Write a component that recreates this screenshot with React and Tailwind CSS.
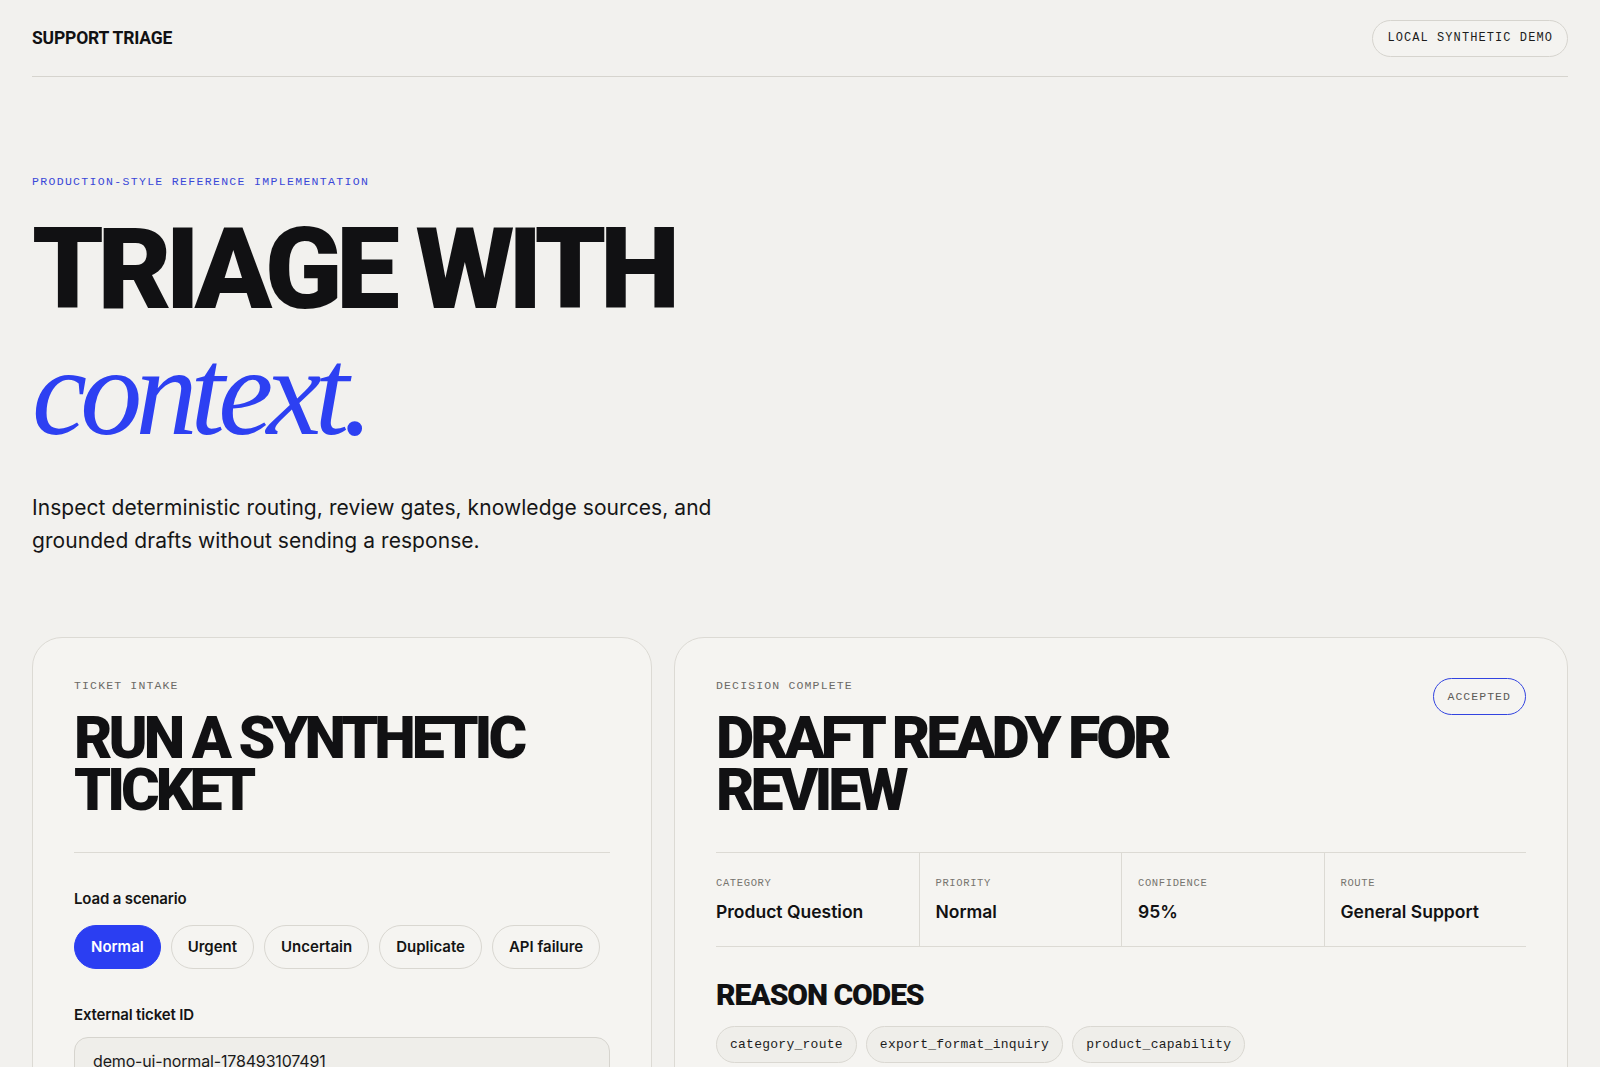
import { useState } from "react";

const SCENARIOS = ["Normal", "Urgent", "Uncertain", "Duplicate", "API failure"];

const STATS = [
  { label: "Category", value: "Product Question" },
  { label: "Priority", value: "Normal" },
  { label: "Confidence", value: "95%" },
  { label: "Route", value: "General Support" },
];

const REASONS = ["category_route", "export_format_inquiry", "product_capability"];

/* ── mono caption used for section labels ── */
function Eyebrow({ children, className = "" }) {
  return (
    <p className={`font-['Liberation_Mono',monospace] text-[11.5px] leading-4 uppercase tracking-[0.1em] ${className}`}>
      {children}
    </p>
  );
}

/* ── big condensed card heading ── */
const CardTitle = ({ children }) => (
  <h2 className="mt-[18px] max-w-[520px] font-['Roboto',sans-serif] font-black uppercase text-[59px] leading-[52px] tracking-[-0.068em] text-[#111113]">
    {children}
  </h2>
);

function TicketIntake() {
  const [scenario, setScenario] = useState("Normal");

  return (
    <section className="rounded-[30px] border border-[#dcdad4] bg-[#f5f4f1] px-[41px] pt-10 pb-12">
      <Eyebrow className="text-[#6c6a66]">Ticket intake</Eyebrow>
      <CardTitle>Run a synthetic ticket</CardTitle>

      <div className="mt-9 border-t border-[#dcdad4]" />

      <p className="mt-[36px] text-[15px] leading-5 font-semibold tracking-[-0.01em]">Load a scenario</p>
      <div className="mt-4 flex gap-[10px]">
        {SCENARIOS.map((s) => (
          <button
            key={s}
            onClick={() => setScenario(s)}
            className={`h-11 shrink-0 whitespace-nowrap rounded-full px-4 text-[15px] font-semibold border
              ${scenario === s
                ? "bg-[#2b3ef2] border-[#2b3ef2] text-white"
                : "border-[#d9d7d1] text-[#141414] bg-transparent"}`}
          >
            {s}
          </button>
        ))}
      </div>

      <label className="mt-[36px] block text-[15px] leading-5 font-semibold tracking-[-0.01em]">External ticket ID</label>
      <input
        defaultValue="demo-ui-normal-178493107491"
        className="mt-3 block h-12 w-full rounded-[14px] border border-[#d6d4ce] bg-[#efeeea] px-[18px] text-[16px] tracking-[-0.01em] text-[#1a1a1a] outline-none"
      />

      <label className="mt-8 block text-[15px] leading-5 font-semibold tracking-[-0.01em]">Customer message</label>
      <textarea
        rows={5}
        defaultValue="Hi, can I export my monthly reports as CSV as well as PDF? We need it for our finance team."
        className="mt-3 block w-full resize-none rounded-[14px] border border-[#d6d4ce] bg-[#efeeea] px-[18px] py-3 text-[16px] text-[#1a1a1a] outline-none"
      />

      <button className="mt-8 h-12 w-full rounded-full bg-[#111113] text-[15px] font-semibold text-white">
        Run triage
      </button>
    </section>
  );
}

function Decision() {
  return (
    <section className="rounded-[30px] border border-[#dcdad4] bg-[#f5f4f1] px-[41px] pt-10 pb-12">
      <div className="flex items-start justify-between gap-6">
        <div>
          <Eyebrow className="text-[#6c6a66]">Decision complete</Eyebrow>
          <CardTitle>Draft ready for review</CardTitle>
        </div>
        <span className="flex h-[37px] items-center rounded-full border border-[#3243e0] px-[14px] font-['Liberation_Mono',monospace] text-[11.5px] uppercase tracking-[0.09em] text-[#5d5b57]">
          Accepted
        </span>
      </div>

      {/* ── summary strip ── */}
      <div className="mt-9 grid grid-cols-4 border-y border-[#dcdad4]">
        {STATS.map((s, i) => (
          <div key={s.label} className={`pt-[22px] pb-[22px] pr-4 ${i > 0 ? "border-l border-[#dcdad4] pl-4" : ""}`}>
            <p className="font-['Liberation_Mono',monospace] text-[10.5px] leading-4 uppercase tracking-[0.06em] text-[#77746f]">
              {s.label}
            </p>
            <p className="mt-[9px] text-[17.5px] leading-6 font-semibold text-[#111113]">{s.value}</p>
          </div>
        ))}
      </div>

      <h3 className="mt-[33px] font-['Roboto',sans-serif] font-black uppercase text-[30px] leading-[30px] tracking-[-0.035em] text-[#111113]">
        Reason codes
      </h3>
      <div className="mt-4 flex flex-wrap gap-[9px]">
        {REASONS.map((r) => (
          <span
            key={r}
            className="flex h-[37px] items-center rounded-full border border-[#dad8d2] bg-[#efeeea] px-[13px] font-['Liberation_Mono',monospace] text-[13px] tracking-[0.02em] text-[#1c1c1c]"
          >
            {r}
          </span>
        ))}
      </div>

      <h3 className="mt-10 font-['Roboto',sans-serif] font-black uppercase text-[30px] leading-[30px] tracking-[-0.035em] text-[#111113]">
        Draft response
      </h3>
      <p className="mt-4 text-[17px] leading-7 text-[#2a2a2a]">
        Thanks for reaching out. Monthly reports can be exported as CSV or PDF from the Reports page.
      </p>
    </section>
  );
}

export default function App() {
  return (
    <div className="min-h-screen bg-[#f2f1ee] font-['Inter',sans-serif] text-[#141414]">
      <div className="px-8 pb-24">
        {/* ── top bar ── */}
        <header className="flex h-[77px] items-center justify-between border-b border-[#d6d4ce]">
          <span className="font-['Roboto',sans-serif] text-[17.5px] font-bold uppercase tracking-[-0.01em] text-[#111113]">
            Support Triage
          </span>
          <span className="flex h-[37px] items-center rounded-full border border-[#d6d4ce] bg-[#f4f3f0] px-[14px] font-['Liberation_Mono',monospace] text-[12px] uppercase tracking-[0.09em] text-[#1c1c1c]">
            Local synthetic demo
          </span>
        </header>

        {/* ── hero ── */}
        <div className="pt-[97px]">
          <p className="font-['Liberation_Mono',monospace] text-[11.5px] leading-4 uppercase tracking-[0.115em] text-[#3a48d8]">
            Production-style reference implementation
          </p>
          <h1 className="mt-[22px]">
            <span className="block font-['Roboto',sans-serif] font-black uppercase text-[114px] leading-[114px] tracking-[-0.056em] text-[#111113]">
              Triage with
            </span>
            <span className="mt-[5px] block font-['Liberation_Serif',serif] italic font-normal text-[124px] leading-[124px] tracking-[-0.055em] text-[#2d40f2]">
              context.
            </span>
          </h1>
          <p className="mt-[36px] max-w-[720px] text-[21px] leading-[33px] tracking-[0.003em] text-[#161616]">
            Inspect deterministic routing, review gates, knowledge sources, and grounded drafts without sending a response.
          </p>
        </div>

        {/* ── workspace ── */}
        <div className="mt-[80px] grid grid-cols-[620px_1fr] gap-[22px]">
          <TicketIntake />
          <Decision />
        </div>
      </div>
    </div>
  );
}
